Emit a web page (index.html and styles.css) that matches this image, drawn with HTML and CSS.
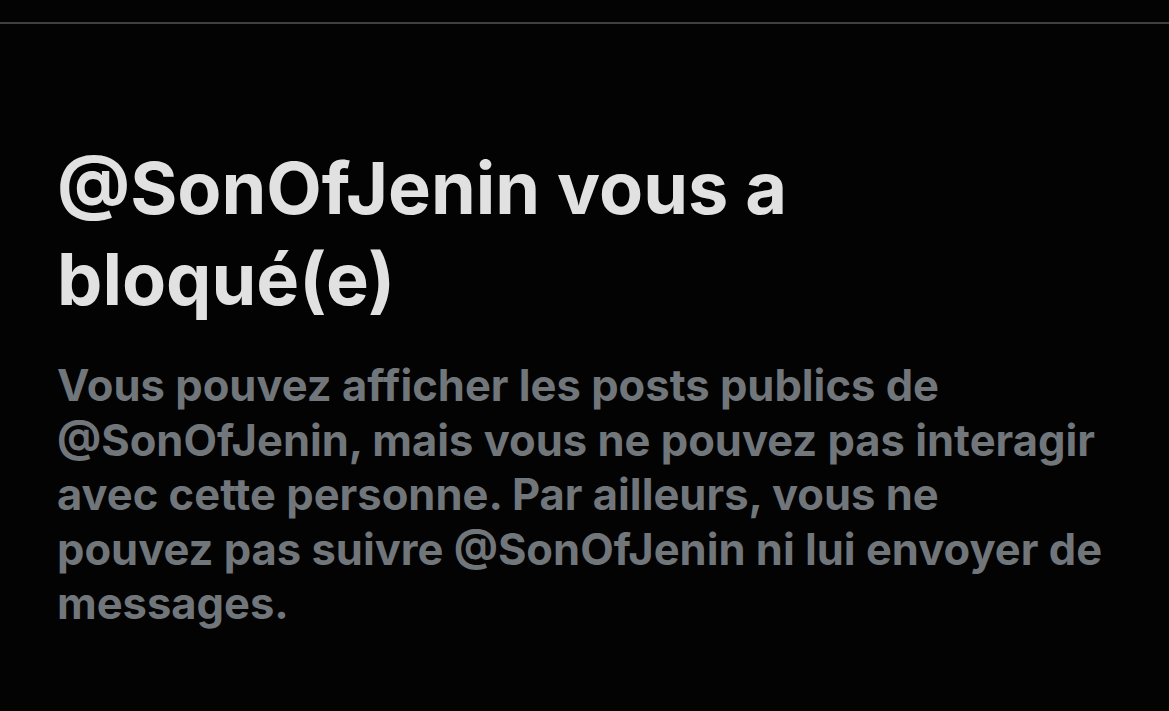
FILE: index.html
```html
<!DOCTYPE html>
<html lang="fr">
<head>
<meta charset="utf-8">
<link rel="stylesheet" href="styles.css">
</head>
<body>
<div class="page">
  <div class="divider"></div>
  <main class="content">
    <h1 class="title">@SonOfJenin vous a bloqué(e)</h1>
    <p class="desc">Vous pouvez afficher les posts publics de @SonOfJenin, mais vous ne pouvez pas interagir avec cette personne. Par ailleurs, vous ne<br>pouvez pas suivre @SonOfJenin ni lui envoyer de messages.</p>
  </main>
</div>
</body>
</html>
```
FILE: styles.css
```css
html, body {
  margin: 0;
  padding: 0;
  background: #000;
}
.page {
  width: 1169px;
  height: 711px;
  background: #030303;
  padding-top: 22px;
  box-sizing: border-box;
  overflow: hidden;
}
.divider {
  height: 2px;
  background: #3f3f3f;
}
.content {
  padding: 118px 60px 0 57px;
}
.title {
  margin: 0;
  font-family: Inter, "Liberation Sans", sans-serif;
  font-weight: 700;
  font-size: 72px;
  line-height: 91px;
  color: #e1e1e1;
  width: 800px;
}
.desc {
  margin: 34px 0 0;
  font-family: Inter, "Liberation Sans", sans-serif;
  font-weight: 700;
  font-size: 43.5px;
  line-height: 54.5px;
  color: #71767b;
  width: 1070px;
}
```
